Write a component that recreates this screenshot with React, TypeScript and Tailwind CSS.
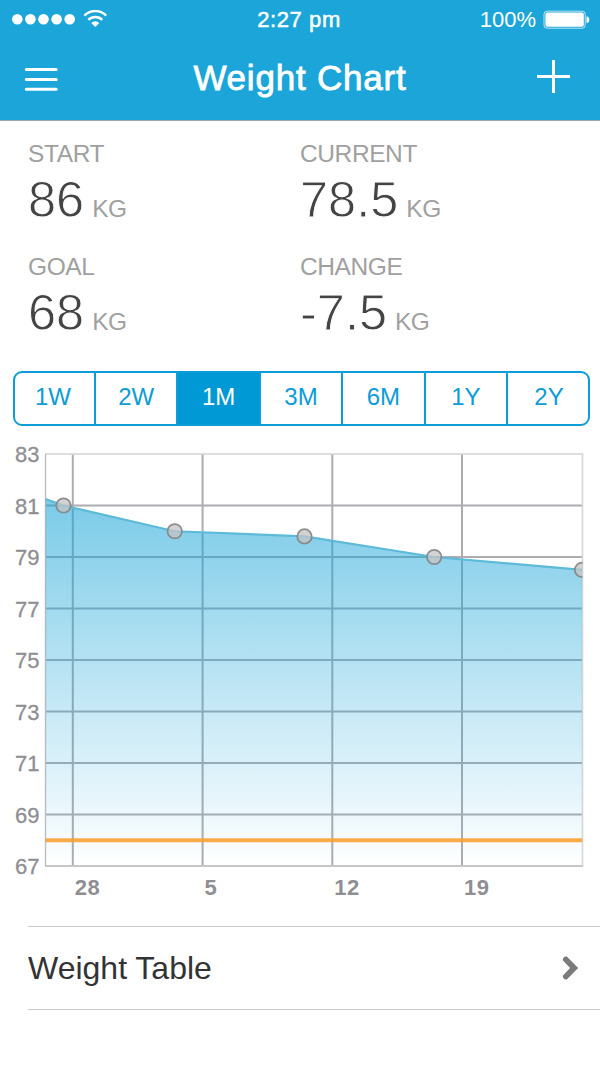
import { useState } from 'react';

interface Stat {
  label: string;
  value: string;
}

const stats: Stat[] = [
  { label: 'START', value: '86' },
  { label: 'CURRENT', value: '78.5' },
  { label: 'GOAL', value: '68' },
  { label: 'CHANGE', value: '-7.5' },
];

const ranges = ['1W', '2W', '1M', '3M', '6M', '1Y', '2Y'];

const plot = { left: 45.5, right: 582.5, top: 14, bottom: 426 };
const minWeight = 67;
const maxWeight = 83;
const goal = 68;

const yTicks = [83, 81, 79, 77, 75, 73, 71, 69, 67];
const xTicks = [
  { x: 72.8, label: '28' },
  { x: 202.6, label: '5' },
  { x: 332.3, label: '12' },
  { x: 462, label: '19' },
];

// the first entry is where the line enters the visible range
const entries = [
  { x: 45.5, kg: 81.25 },
  { x: 63.5, kg: 81 },
  { x: 174.7, kg: 80 },
  { x: 304.5, kg: 79.8 },
  { x: 434.2, kg: 79 },
  { x: 582, kg: 78.5 },
];

const toY = (kg: number) =>
  plot.top + ((maxWeight - kg) / (maxWeight - minWeight)) * (plot.bottom - plot.top);

function StatusBar() {
  return (
    <div className="grid h-10 grid-cols-3 items-center pr-[10px] pl-3">
      <div className="flex items-center">
        <svg width="96" height="20" viewBox="0 0 96 20" fill="white">
          {[5.3, 18.4, 31.5, 44.6, 57.7].map(cx => (
            <circle key={cx} cx={cx} cy="9.2" r="5.3" />
          ))}
          <g fill="none" stroke="white" strokeWidth="2.5">
            <path d="M72.4 5.6 A15.5 15.5 0 0 1 94.2 5.6" />
            <path d="M76.3 9.9 A10 10 0 0 1 90.3 9.9" />
          </g>
          <path d="M79.3 12.9 A6 6 0 0 1 87.3 12.9 L83.3 17 Z" />
        </svg>
      </div>
      <span className="pr-1 text-center text-[22px] leading-none tracking-[0.6px] [-webkit-text-stroke:0.5px_white]">2:27 pm</span>
      <div className="flex items-center justify-end gap-[7px]">
        <span className="text-[22px] leading-none">100%</span>
        <svg width="47" height="20" viewBox="0 0 47 20">
          <rect x="1" y="1.2" width="41.2" height="17" rx="3" fill="none" stroke="white" strokeOpacity="0.7" strokeWidth="1" />
          <rect x="2.4" y="2.6" width="38.4" height="14.2" rx="1.8" fill="white" />
          <path d="M43.5 6.3 Q46.3 7 46.3 9.7 Q46.3 12.4 43.5 13.1 Z" fill="white" />
        </svg>
      </div>
    </div>
  );
}

function NavBar() {
  return (
    <div className="flex h-[76px] items-center justify-between pr-[30px] pl-6">
      <button aria-label="Menu" className="pt-1">
        <svg width="34" height="26" viewBox="0 0 34 26" stroke="white" strokeWidth="3" strokeLinecap="round">
          <path d="M2.3 2.6H32.2M2.3 12.5H32.2M2.3 22.2H32.2" />
        </svg>
      </button>
      <h1 className="pl-[5px] text-[35px] leading-10 tracking-[0.8px] [-webkit-text-stroke:0.8px_white]">Weight Chart</h1>
      <button aria-label="Add weight" className="pb-[3px]">
        <svg width="33" height="33" viewBox="0 0 33 33" stroke="white" strokeWidth="3">
          <path d="M0 16.5H33M16.5 0V33" />
        </svg>
      </button>
    </div>
  );
}

function StatItem({ label, value }: Stat) {
  return (
    <div className="h-[113px]">
      <div className="text-[24.5px] leading-[30px] tracking-[-0.4px] text-[#a0a0a0]">{label}</div>
      <div className="flex items-baseline gap-2">
        <span className="text-[50.5px] leading-[62px] text-[#444] [-webkit-text-stroke:0.9px_white]">{value}</span>
        <span className="text-[24.5px] tracking-[-0.5px] text-[#a0a0a0]">KG</span>
      </div>
    </div>
  );
}

function WeightChart() {
  const line = entries.map(e => `${e.x},${toY(e.kg)}`).join(' ');

  return (
    <svg className="block" width="600" height="470" viewBox="0 0 600 470">
      <defs>
        <linearGradient id="area" x1="0" y1={toY(81.25)} x2="0" y2={plot.bottom} gradientUnits="userSpaceOnUse">
          <stop offset="0" stopColor="#1ba5d8" stopOpacity="0.58" />
          <stop offset="1" stopColor="#1ba5d8" stopOpacity="0" />
        </linearGradient>
        <clipPath id="plot">
          <rect x={plot.left} y="0" width={plot.right - plot.left} height="440" />
        </clipPath>
      </defs>

      <g stroke="#acacb2" strokeWidth="2">
        {yTicks.slice(1, -1).map(kg => (
          <line key={kg} x1={plot.left} x2={plot.right} y1={toY(kg)} y2={toY(kg)} />
        ))}
        {xTicks.map(t => (
          <line key={t.label} x1={t.x} x2={t.x} y1={plot.top} y2={plot.bottom} />
        ))}
      </g>
      <rect
        x={plot.left}
        y={plot.top}
        width={plot.right - plot.left}
        height={plot.bottom - plot.top}
        fill="none"
        stroke="#d6d6d9"
        strokeWidth="1.6"
      />
      <line x1={plot.left} x2={plot.left} y1={plot.top} y2={plot.bottom} stroke="#bcbcc0" />
      <line x1={plot.left} x2={plot.right} y1={plot.bottom} y2={plot.bottom} stroke="#c6c6ca" strokeWidth="2" />

      <g clipPath="url(#plot)">
        <polygon points={`${plot.left},${plot.bottom} ${line} ${plot.right},${plot.bottom}`} fill="url(#area)" />
        <polyline points={line} fill="none" stroke="#5dbad8" strokeWidth="2.2" />
        <line x1={plot.left} x2={plot.right} y1={toY(goal)} y2={toY(goal)} stroke="#f99f2e" strokeOpacity="0.88" strokeWidth="4" />
        {entries.slice(1).map(e => (
          <circle
            key={e.x}
            cx={e.x}
            cy={toY(e.kg)}
            r="7.2"
            fill="#c4c4c4"
            fillOpacity="0.75"
            stroke="#858585"
            strokeOpacity="0.9"
            strokeWidth="1.8"
          />
        ))}
      </g>

      <g fill="#8e8e93" fontSize="22">
        {yTicks.map(kg => (
          <text key={kg} x="15" y={toY(kg) + 8} stroke="#8e8e93" strokeWidth="0.3">{kg}</text>
        ))}
        {xTicks.map(t => (
          <text key={t.label} x={t.x + 2} y="455" fontWeight="bold" letterSpacing="0.4">{t.label}</text>
        ))}
      </g>
    </svg>
  );
}

export default function App() {
  const [range, setRange] = useState('1M');

  return (
    <div className="h-[1065px] w-[600px] overflow-hidden bg-white font-['Liberation_Sans',Arial,sans-serif]">
      <header className="h-[121px] border-b border-[#9aa9b0] bg-[#1ba5d8] text-white">
        <StatusBar />
        <NavBar />
      </header>

      <section className="grid h-[250px] grid-cols-2 content-start pt-[18px]">
        {stats.map((stat, i) => (
          <div key={stat.label} className={i % 2 === 0 ? 'pl-7' : ''}>
            <StatItem {...stat} />
          </div>
        ))}
      </section>

      <div className="mr-[10px] ml-[13px] flex h-[55px] overflow-hidden rounded-[9px] border-2 border-[#0c9cd8]">
        {ranges.map(r => (
          <button
            key={r}
            onClick={() => setRange(r)}
            className={`flex-1 border-r-2 border-[#0c9cd8] pb-[3px] text-[24px] leading-none first:w-[81px] first:flex-none first:pr-[3px] last:w-20 last:flex-none last:border-r-0 last:pl-[2px] ${
              r === range ? 'bg-[#0099d5] text-white' : 'text-[#0c9cd8]'
            }`}
          >
            {r}
          </button>
        ))}
      </div>

      <div className="mt-[14px] h-[486px]">
        <WeightChart />
      </div>

      <button className="ml-7 flex h-[84px] w-[572px] items-center justify-between border-y border-[#cacaca] pr-[21px] text-left">
        <span className="text-[32px] leading-10 text-[#333]">Weight Table</span>
        <svg width="17" height="24" viewBox="0 0 17 24" fill="#7a7a7a">
          <path d="M4.8 0.6 L16.2 12 L4.8 23.4 Q3 24 1.7 22.5 Q0.2 21 1 19.5 L8 12 L1 4.5 Q0.2 3 1.7 1.5 Q3 0 4.8 0.6 Z" />
        </svg>
      </button>
    </div>
  );
}
